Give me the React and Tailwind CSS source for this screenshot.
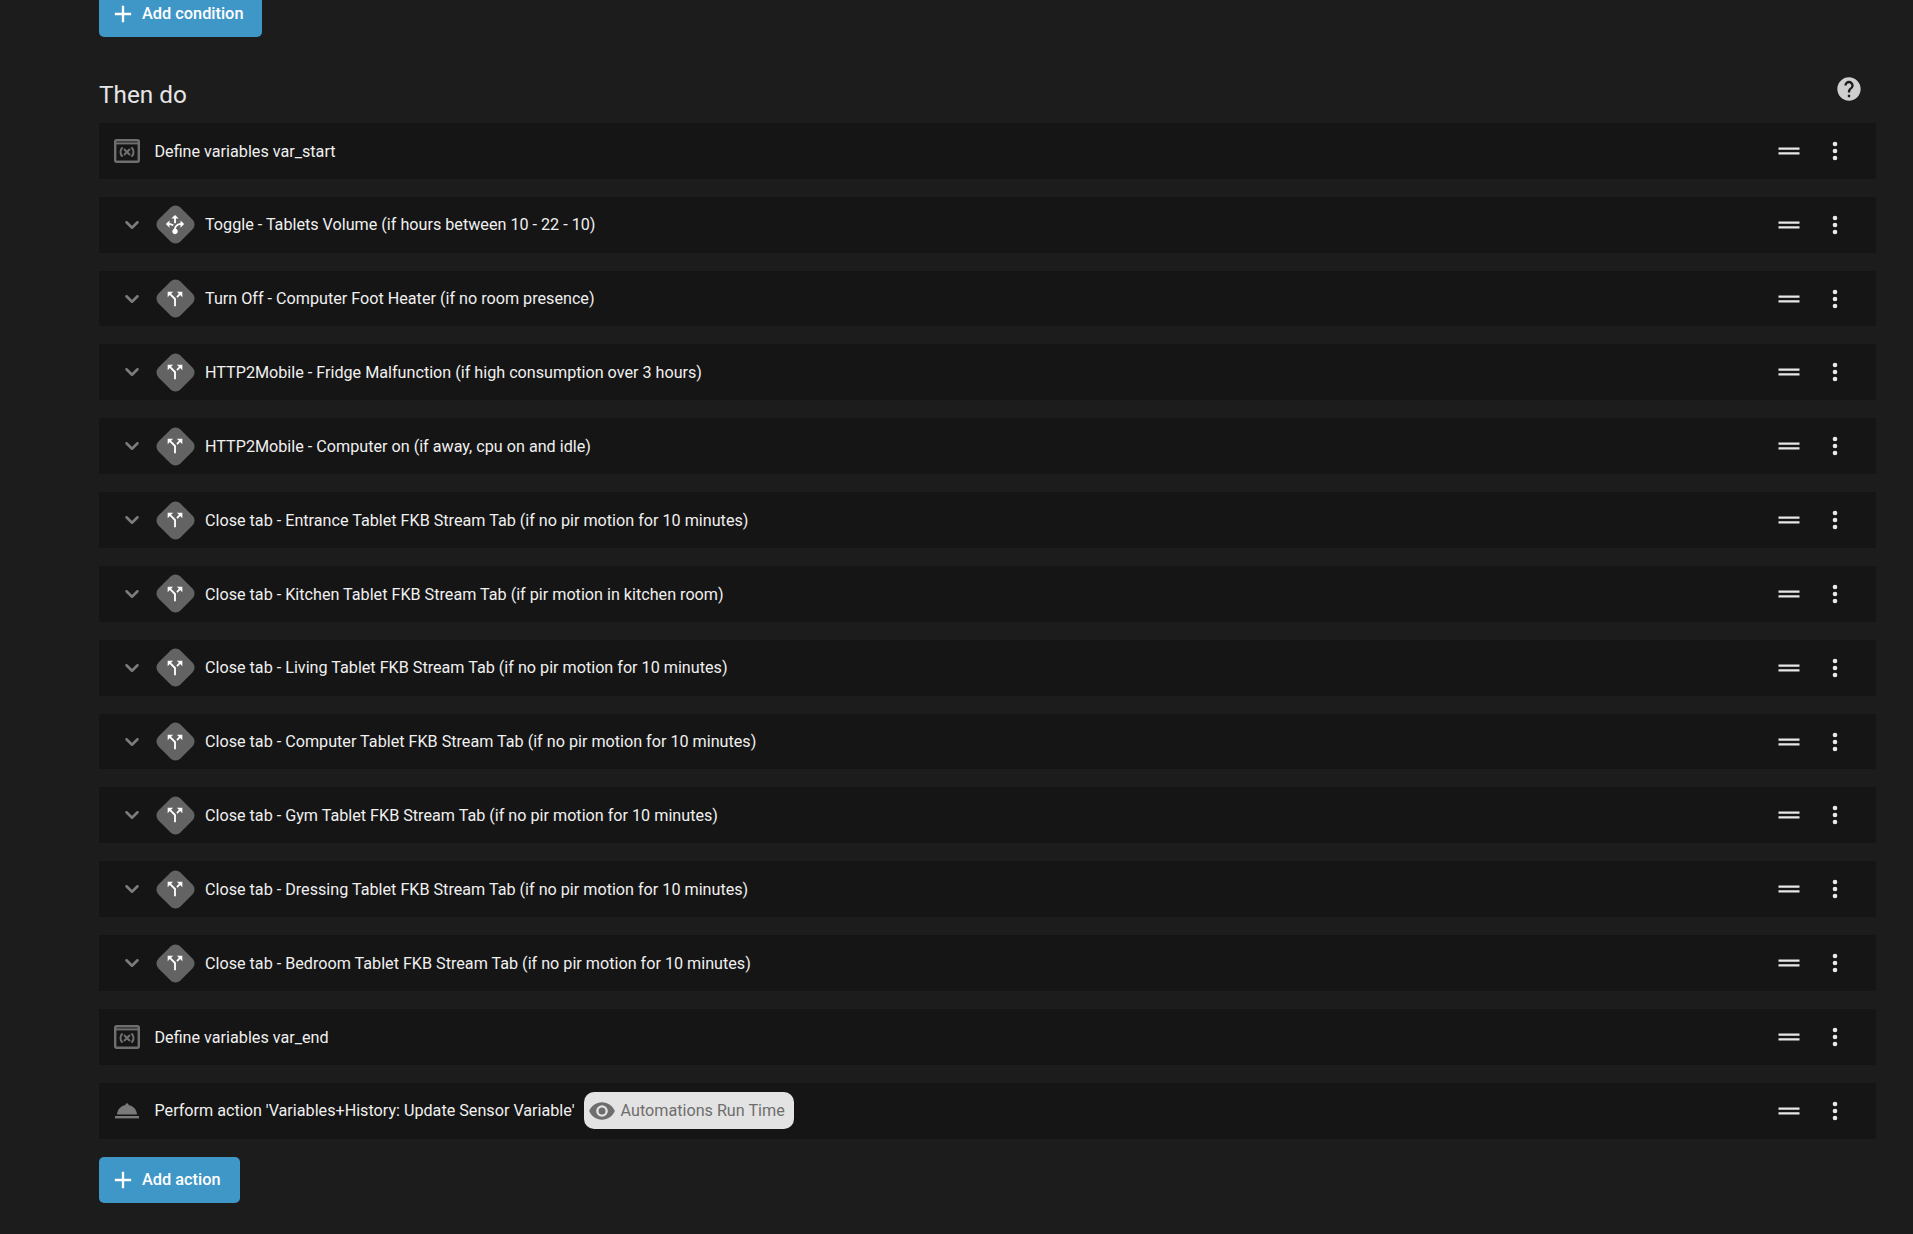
import React from 'react';
import { ChevronDown } from 'lucide-react';

const SPLIT = 'M14,4L16.29,6.29L13.41,9.17L14.83,10.59L17.71,7.71L20,10V4M10,4H4V10L6.29,7.71L11,12.41V20H13V11.59L7.71,6.29';
const DECISION =
  'M9.64,13.4C8.63,12.5 7.34,12.03 6,12V15L2,11L6,7V10C7.67,10 9.3,10.57 10.63,11.59C10.22,12.15 9.89,12.76 9.64,13.4M18,15V12C17.5,12 13.5,12.16 13.05,16.2C14.61,16.75 15.43,18.47 14.88,20.03C14.33,21.59 12.61,22.41 11.05,21.86C9.5,21.31 8.67,19.59 9.22,18.03C9.5,17.17 10.2,16.5 11.05,16.2C11.34,12.03 14.96,10 18,10V7L22,11L18,15M13,10V5H16L12,1L8,5H11V10.1C11.66,9.96 12.33,9.96 13,10Z';

const rows = [
  { type: 'var', text: 'Define variables var_start' },
  { type: 'choose', text: 'Toggle - Tablets Volume (if hours between 10 - 22 - 10)' },
  { type: 'if', text: 'Turn Off - Computer Foot Heater (if no room presence)' },
  { type: 'if', text: 'HTTP2Mobile - Fridge Malfunction (if high consumption over 3 hours)' },
  { type: 'if', text: 'HTTP2Mobile - Computer on (if away, cpu on and idle)' },
  { type: 'if', text: 'Close tab - Entrance Tablet FKB Stream Tab (if no pir motion for 10 minutes)' },
  { type: 'if', text: 'Close tab - Kitchen Tablet FKB Stream Tab (if pir motion in kitchen room)' },
  { type: 'if', text: 'Close tab - Living Tablet FKB Stream Tab (if no pir motion for 10 minutes)' },
  { type: 'if', text: 'Close tab - Computer Tablet FKB Stream Tab (if no pir motion for 10 minutes)' },
  { type: 'if', text: 'Close tab - Gym Tablet FKB Stream Tab (if no pir motion for 10 minutes)' },
  { type: 'if', text: 'Close tab - Dressing Tablet FKB Stream Tab (if no pir motion for 10 minutes)' },
  { type: 'if', text: 'Close tab - Bedroom Tablet FKB Stream Tab (if no pir motion for 10 minutes)' },
  { type: 'var', text: 'Define variables var_end' },
  { type: 'action', text: "Perform action 'Variables+History: Update Sensor Variable'", chip: 'Automations Run Time' },
];

const VariableIcon = () => (
  <svg viewBox="0 0 26 24" className="w-[26px] h-6 shrink-0 text-[#6f6f6f]" fill="none" stroke="currentColor">
    <rect x="1.2" y="1.2" width="23.6" height="21.6" rx="1.5" strokeWidth="2.4" />
    <path d="M1 4.4h24" strokeWidth="2" />
    <path d="M8 9c-2 2-2 6 0 8M18 9c2 2 2 6 0 8M10.5 10.5l5 5M15.5 10.5l-5 5" strokeWidth="2" strokeLinecap="round" />
  </svg>
);

const BellIcon = () => (
  <svg viewBox="0 0 26 24" className="w-[26px] h-6 shrink-0 text-[#7a7a7a]" fill="currentColor">
    <circle cx="13" cy="6" r="1.7" />
    <path d="M13 6C7 6 3.3 10.5 3 15.5H23C22.7 10.5 19 6 13 6Z" />
    <rect x="1" y="17" width="24" height="2.4" />
  </svg>
);

const DiamondIcon = ({ path }) => (
  <div className="relative w-[40px] h-[40px] shrink-0 flex items-center justify-center">
    <div className="absolute w-[31px] h-[31px] rotate-45 rounded-[7px] bg-[#636363]" />
    <svg viewBox="0 0 24 24" className="relative w-[22px] h-[22px] text-white" fill="currentColor">
      <path d={path} />
    </svg>
  </div>
);

const RowControls = () => (
  <div className="ml-auto flex items-center gap-[9px] pr-[18.5px] text-[#e8e8e8]">
    <svg viewBox="0 0 24 24" className="w-7 h-7" fill="currentColor">
      <path d="M21 11H3V9H21V11M21 13H3V15H21V13Z" />
    </svg>
    <div className="w-[46px] flex justify-center">
      <svg viewBox="0 0 24 24" className="w-7 h-7" fill="currentColor">
        <circle cx="12" cy="6" r="2" />
        <circle cx="12" cy="12" r="2" />
        <circle cx="12" cy="18" r="2" />
      </svg>
    </div>
  </div>
);

const Row = ({ type, text, chip }) => {
  const nested = type === 'if' || type === 'choose';
  return (
    <div className="h-[55.83px] bg-[#151515] flex items-center">
      {nested ? (
        <div className="flex items-center pl-[22px]">
          <ChevronDown className="w-[22px] h-[22px] text-[#7c7c7c]" strokeWidth={2.8} />
          <div className="ml-[12px] mr-[10px]">
            <DiamondIcon path={type === 'choose' ? DECISION : SPLIT} />
          </div>
        </div>
      ) : (
        <div className="pl-[15px] pr-[14.5px]">{type === 'var' ? <VariableIcon /> : <BellIcon />}</div>
      )}
      <span className="pt-[1.6px] text-[16.17px] text-[#f0f0f0]">{text}</span>
      {chip && (
        <span className="ml-[9px] h-[37px] pl-[4px] pr-[9px] flex items-center gap-[5px] rounded-[10px] bg-[#e3e3e3] text-[16.17px] text-[#6e6e6e]">
          <svg viewBox="0 0 24 24" className="w-7 h-7" fill="currentColor">
            <path d="M12,9A3,3 0 0,0 9,12A3,3 0 0,0 12,15A3,3 0 0,0 15,12A3,3 0 0,0 12,9M12,17A5,5 0 0,1 7,12A5,5 0 0,1 12,7A5,5 0 0,1 17,12A5,5 0 0,1 12,17M12,4.5C7,4.5 2.73,7.61 1,12C2.73,16.39 7,19.5 12,19.5C17,19.5 21.27,16.39 23,12C21.27,7.61 17,4.5 12,4.5Z" />
          </svg>
          {chip}
        </span>
      )}
      <RowControls />
    </div>
  );
};

const AddButton = ({ label, className = '' }) => (
  <button className={`h-[46px] pl-[10px] pr-[19px] flex items-center gap-[5px] rounded-[5px] bg-[#3f97c7] text-white text-[16.33px] font-medium ${className}`}>
    <svg viewBox="0 0 24 24" className="w-7 h-7 shrink-0" fill="currentColor">
      <path d="M19,13H13V19H11V13H5V11H11V5H13V11H19V13Z" />
    </svg>
    <span className="pt-[1px]">{label}</span>
  </button>
);

export default function App() {
  return (
    <div className="h-[1234px] overflow-hidden bg-[#1c1c1c] pl-[99px] pr-[37px] font-['Roboto',sans-serif]">
      <AddButton label="Add condition" className="-mt-[9px]" />
      <div className="mt-[39px] h-[47px] flex items-center justify-between">
        <h2 className="-mt-[8px] text-[24.3px] text-[#e6e6e6]">Then do</h2>
        <svg viewBox="0 0 24 24" className="w-7 h-7 mr-[13px] -mt-[22px] text-[#cfcfcf]" fill="currentColor">
          <path d="M15.07,11.25L14.17,12.17C13.45,12.89 13,13.5 13,15H11V14.5C11,13.39 11.45,12.39 12.17,11.67L13.41,10.41C13.78,10.05 14,9.55 14,9C14,7.89 13.1,7 12,7A2,2 0 0,0 10,9H8A4,4 0 0,1 12,5A4,4 0 0,1 16,9C16,9.88 15.64,10.67 15.07,11.25M13,19H11V17H13M12,2A10,10 0 0,0 2,12A10,10 0 0,0 12,22A10,10 0 0,0 22,12C22,6.47 17.5,2 12,2Z" />
        </svg>
      </div>
      <div className="flex flex-col gap-[18px]">
        {rows.map((row) => (
          <Row key={row.text} {...row} />
        ))}
      </div>
      <AddButton label="Add action" className="mt-[18px]" />
    </div>
  );
}
